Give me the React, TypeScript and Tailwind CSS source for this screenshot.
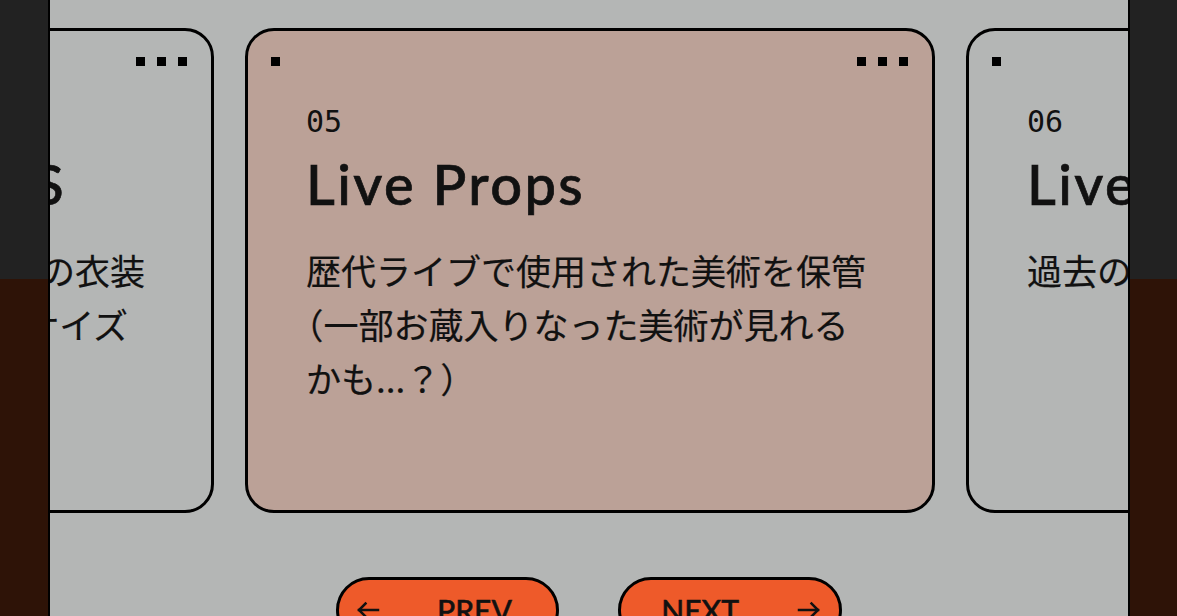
import React from "react";

type Card = {
  no: string;
  title: string;
  lines: string;
  tone: "plain" | "active";
};

const cards: Card[] = [
  {
    no: "04",
    title: "Stage Outfit SETS",
    lines: "ライブで着用されたメンバーの衣装を展示! 実物そのままの原寸サイズで",
    tone: "plain",
  },
  {
    no: "05",
    title: "Live Props",
    lines: "歴代ライブで使用された美術を保管（一部お蔵入りなった美術が見れるかも...？）",
    tone: "active",
  },
  {
    no: "06",
    title: "Live Photos",
    lines: "過去のライブ写真を展示",
    tone: "plain",
  },
];

function Dot() {
  return <span className="block w-[9px] h-[9px] bg-black" />;
}

function ExhibitCard({ card }: { card: Card }) {
  return (
    <div
      className={
        card.tone === "active"
          ? "relative shrink-0 w-[690px] h-[485px] rounded-[29px] border-[3px] border-black bg-[#bba197]"
          : "relative shrink-0 w-[690px] h-[485px] rounded-[29px] border-[3px] border-black bg-[#b4b6b5]"
      }
    >
      <div className="absolute left-[23px] top-[26px]">
        <Dot />
      </div>
      <div className="absolute right-[24px] top-[26px] flex gap-[12px]">
        <Dot />
        <Dot />
        <Dot />
      </div>
      <div className="pl-[58px] pr-[58px] pt-[76px] text-[#111]">
        <div className="font-['DejaVu_Sans_Mono',monospace] text-[30px] leading-[30px]">
          {card.no}
        </div>
        <h2 className="mt-[19px] font-['Lato',sans-serif] font-medium text-[56px] leading-[56px] tracking-[2.4px] whitespace-nowrap [-webkit-text-stroke:0.7px_#111]">
          {card.title}
        </h2>
        <p className="mt-[31px] font-['Noto_Sans_CJK_JP',sans-serif] text-[35px] leading-[54px] [text-spacing-trim:trim-start] [-webkit-text-stroke:0.2px_#111]">
          {card.lines}
        </p>
      </div>
    </div>
  );
}

function Arrow({ dir }: { dir: "left" | "right" }) {
  return (
    <svg
      width="24"
      height="18"
      viewBox="0 0 24 18"
      fill="none"
      stroke="#111"
      strokeWidth="2.5"
      strokeLinecap="square"
      className={dir === "right" ? "rotate-180" : ""}
    >
      <path d="M22 9H3" />
      <path d="M9.5 2.5L3 9l6.5 6.5" />
    </svg>
  );
}

function NavButton({ dir, label }: { dir: "left" | "right"; label: string }) {
  return (
    <button
      className={
        dir === "left"
          ? "flex items-center w-[223px] h-[66px] rounded-full border-[3px] border-black bg-[#ee5a2a] pl-[17px]"
          : "flex items-center justify-end w-[224px] h-[66px] rounded-full border-[3px] border-black bg-[#ee5a2a] pr-[18px]"
      }
    >
      {dir === "left" && <Arrow dir="left" />}
      <span
        className={
          dir === "left"
            ? "ml-[57px] font-['Lato',sans-serif] font-medium text-[30px] leading-none text-[#111] [-webkit-text-stroke:0.5px_#111]"
            : "mr-[58px] font-['Lato',sans-serif] font-medium text-[30px] leading-none text-[#111] [-webkit-text-stroke:0.5px_#111]"
        }
      >
        {label}
      </span>
      {dir === "right" && <Arrow dir="right" />}
    </button>
  );
}

function SideStrip({ w }: { w: string }) {
  return (
    <div className={`flex flex-col shrink-0 ${w}`}>
      <div className="h-[279px] bg-[#222222]" />
      <div className="flex-1 bg-[#2e1307]" />
    </div>
  );
}

export default function App() {
  return (
    <div className="flex w-[1177px] h-[616px] overflow-hidden bg-[#222222]">
      <SideStrip w="w-[48px]" />
      <main className="flex-1 min-w-0 flex flex-col border-x-2 border-black bg-[#b4b6b5] overflow-hidden pt-[28px]">
        <div className="flex gap-[31px] ml-[-526px]">
          {cards.map((c) => (
            <ExhibitCard key={c.no} card={c} />
          ))}
        </div>
        <div className="mt-[64px] flex justify-center gap-[59px]">
          <NavButton dir="left" label="PREV" />
          <NavButton dir="right" label="NEXT" />
        </div>
      </main>
      <SideStrip w="w-[47px]" />
    </div>
  );
}
